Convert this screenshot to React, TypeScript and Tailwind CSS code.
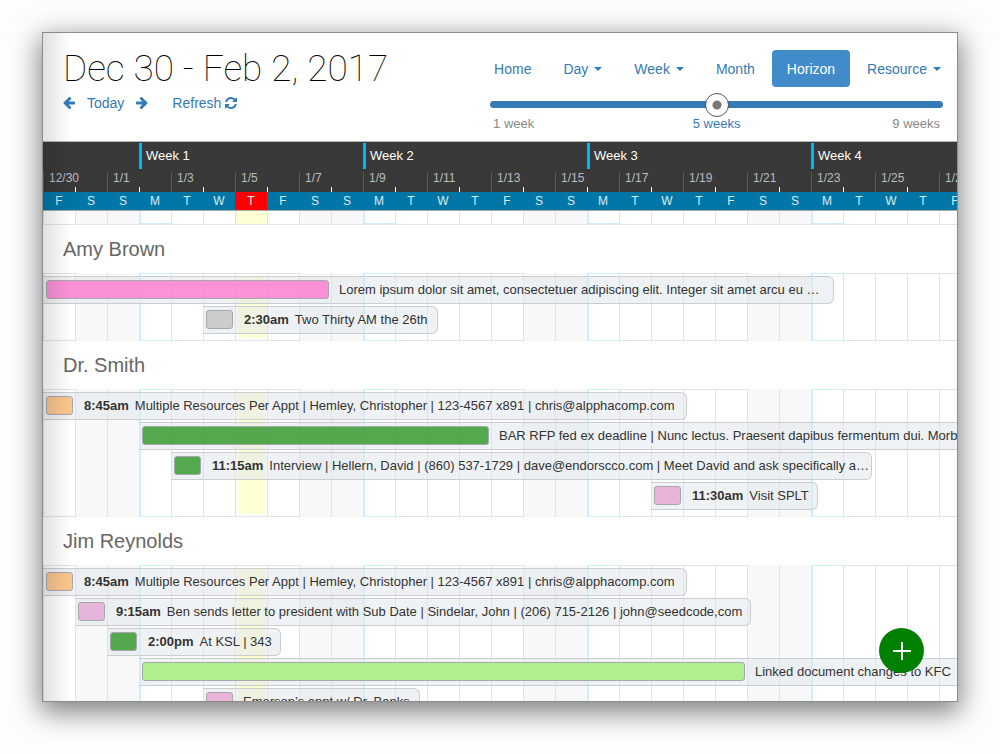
import React, { useState } from 'react';
import clsx from 'clsx';

type Appointment = {
  day: number;
  days: number;
  color: string;
  time?: string;
  text: string;
  width: number;
};

type Resource = {
  name: string;
  items: Appointment[];
};

const DAY_WIDTH = 32;
const DAY_COUNT = 29;
const TODAY = 6;
const LETTERS = ['F', 'S', 'S', 'M', 'T', 'W', 'T'];

const NAV = [
  { label: 'Home' },
  { label: 'Day', menu: true },
  { label: 'Week', menu: true },
  { label: 'Month' },
  { label: 'Horizon' },
  { label: 'Resource', menu: true },
];

const PINK = 'bg-[#fc86d5]/90';
const GRAY = 'bg-[#c8c8c8]/90';
const ORANGE = 'bg-[#f9c184]/90';
const GREEN = 'bg-[#43a03b]/90';
const MAUVE = 'bg-[#e7aed6]/90';
const LIME = 'bg-[#aaf084]/90';

const RESOURCES: Resource[] = [
  {
    name: 'Amy Brown',
    items: [
      { day: 0, days: 9, color: PINK, text: 'Lorem ipsum dolor sit amet, consectetuer adipiscing elit. Integer sit amet arcu eu …', width: 791 },
      { day: 5, days: 1, color: GRAY, time: '2:30am', text: 'Two Thirty AM the 26th', width: 235 },
    ],
  },
  {
    name: 'Dr. Smith',
    items: [
      { day: 0, days: 1, color: ORANGE, time: '8:45am', text: 'Multiple Resources Per Appt | Hemley, Christopher | 123-4567 x891 | chris@alpphacomp.com', width: 644 },
      { day: 3, days: 11, color: GREEN, text: 'BAR RFP fed ex deadline | Nunc lectus. Praesent dapibus fermentum dui. Morb', width: 960 },
      { day: 4, days: 1, color: GREEN, time: '11:15am', text: 'Interview | Hellern, David | (860) 537-1729 | dave@endorscco.com | Meet David and ask specifically a…', width: 701 },
      { day: 19, days: 1, color: MAUVE, time: '11:30am', text: 'Visit SPLT', width: 167 },
    ],
  },
  {
    name: 'Jim Reynolds',
    items: [
      { day: 0, days: 1, color: ORANGE, time: '8:45am', text: 'Multiple Resources Per Appt | Hemley, Christopher | 123-4567 x891 | chris@alpphacomp.com', width: 644 },
      { day: 1, days: 1, color: MAUVE, time: '9:15am', text: 'Ben sends letter to president with Sub Date | Sindelar, John | (206) 715-2126 | john@seedcode,com', width: 676 },
      { day: 2, days: 1, color: GREEN, time: '2:00pm', text: 'At KSL | 343', width: 174 },
      { day: 3, days: 19, color: LIME, text: 'Linked document changes to KFC', width: 960 },
      { day: 5, days: 1, color: MAUVE, text: 'Emerson’s appt w/ Dr. Banks', width: 217 },
    ],
  },
];

const dayList = Array.from({ length: DAY_COUNT }, (_, i) => i);

const dateLabel = (day: number) => {
  const d = new Date(2016, 11, 30 + day);
  return `${d.getMonth() + 1}/${d.getDate()}`;
};

const isMonday = (day: number) => day % 7 === 3;
const isWeekend = (day: number) => day % 7 === 1 || day % 7 === 2;

function ArrowIcon({ flip }: { flip?: boolean }) {
  return (
    <svg viewBox="0 -64 1536 1536" className={clsx('size-3', flip && 'rotate-180')} fill="currentColor" aria-hidden="true">
      <path d="M1536 640v128q0 53-32.500 90.500t-84.500 37.500h-704l293 294q38 36 38 90t-38 90l-75 76q-37 37-90 37-52 0-91-37l-651-652q-37-37-37-90 0-52 37-91l651-650q38-38 91-38 52 0 90 38l75 74q38 38 38 91t-38 91l-293 293h704q52 0 84.500 37.500t32.500 90.500z" />
    </svg>
  );
}

function RefreshIcon() {
  return (
    <svg viewBox="0 0 1536 1536" className="size-3" fill="currentColor" aria-hidden="true">
      <path d="M1511 928q0 5-1 7-64 268-268 434.500t-478 166.500q-146 0-282.500-55t-243.500-157l-129 129q-19 19-45 19t-45-19-19-45v-448q0-26 19-45t45-19h448q26 0 45 19t19 45-19 45l-137 137q71 66 161 102t187 36q134 0 250-65t186-179q11-17 53-117 8-23 30-23h192q13 0 22.500 9.500t9.500 22.500zm25-800v448q0 26-19 45t-45 19h-448q-26 0-45-19t-19-45 19-45l138-138q-148-137-349-137-134 0-250 65t-186 179q-11 17-53 117-8 23-30 23h-199q-13 0-22.500-9.500t-9.500-22.500v-7q65-268 270-434.500t480-166.500q146 0 284 55.500t245 156.500l130-129q19-19 45-19t45 19 19 45z" />
    </svg>
  );
}

function Header() {
  const [view, setView] = useState('Horizon');
  const [weeks, setWeeks] = useState(5);

  return (
    <header className="flex shrink-0 items-start justify-between border-b border-[#b5b5b5] bg-white pb-[9px]">
      <div className="pt-4 pl-5">
        <h1 className="font-[Roboto,sans-serif] text-[37px] leading-10 font-thin whitespace-nowrap text-black">Dec 30 - Feb 2, 2017</h1>
        <div className="flex h-7 items-center text-sm text-[#337ab7]">
          <button aria-label="Previous"><ArrowIcon /></button>
          <button className="ml-3">Today</button>
          <button aria-label="Next" className="ml-3"><ArrowIcon flip /></button>
          <button className="ml-6 flex items-center gap-1">Refresh <RefreshIcon /></button>
        </div>
      </div>
      <div className="pt-[17px] pr-px">
        <nav className="flex gap-[2px]">
          {NAV.map(({ label, menu }) => (
            <button
              key={label}
              onClick={() => setView(label)}
              className={clsx(
                'flex h-[37px] items-center rounded px-[15px] text-sm',
                view === label ? 'bg-[#428bca] text-white' : 'text-[#337ab7]'
              )}
            >
              {label}
              {menu && <span className="ml-[6px] border-x-4 border-t-4 border-x-transparent border-t-[#337ab7]" />}
            </button>
          ))}
        </nav>
        <div className="mr-[13px] ml-[11px] pt-[5px]">
          <input
            type="range"
            aria-label="Weeks shown"
            min={1}
            max={9}
            value={weeks}
            onChange={e => setWeeks(Number(e.target.value))}
            className="block h-6 w-full appearance-none bg-transparent [&::-webkit-slider-runnable-track]:h-[7px] [&::-webkit-slider-runnable-track]:rounded-full [&::-webkit-slider-runnable-track]:bg-[#337ab7] [&::-webkit-slider-thumb]:-mt-2 [&::-webkit-slider-thumb]:size-6 [&::-webkit-slider-thumb]:appearance-none [&::-webkit-slider-thumb]:rounded-full [&::-webkit-slider-thumb]:border [&::-webkit-slider-thumb]:border-[#555] [&::-webkit-slider-thumb]:bg-[radial-gradient(circle,#777_4px,#fff_5px)]"
          />
          <div className="grid grid-cols-3 px-[3px] text-[13px] leading-4 text-[#888]">
            <span>1 week</span>
            <span className="text-center text-[#337ab7]">{weeks} weeks</span>
            <span className="text-right">9 weeks</span>
          </div>
        </div>
      </div>
    </header>
  );
}

function Timescale() {
  return (
    <div className="shrink-0 overflow-hidden border-b border-[#a9a9a9] bg-[#393939]">
      <div className="flex h-7 pt-px">
        <div className="w-24 shrink-0" />
        {[1, 2, 3, 4].map(week => (
          <div key={week} className="mb-px w-56 shrink-0 border-l-[3px] border-[#00b9f2] pl-1 text-[13px] leading-[25px] text-white">
            Week {week}
          </div>
        ))}
      </div>
      <div className="flex h-[22px] items-end">
        {dayList.map(day => (
          <div key={day} className="flex w-8 shrink-0 items-end">
            {day % 2 === 0 ? (
              <span className="h-5 border-l border-[#0076a6] pl-[5px] text-xs leading-[13px] text-[#bbb]">{dateLabel(day)}</span>
            ) : (
              <span className="h-[5px] border-l border-white" />
            )}
          </div>
        ))}
      </div>
      <div className="flex h-[18px] bg-[#0076a6] text-xs leading-[18px] text-[#dcecf3]">
        {dayList.map(day => (
          <span key={day} className={clsx('w-8 shrink-0 text-center', day === TODAY && 'bg-[#ff0000]')}>
            {LETTERS[day % 7]}
          </span>
        ))}
      </div>
    </div>
  );
}

function DayCells({ inset }: { inset?: boolean }) {
  return (
    <>
      {dayList.map(day => (
        <div
          key={day}
          className={clsx(
            'w-8 shrink-0',
            isMonday(day) ? 'border-b border-l-2 border-[#cdf1fb]' : 'border-l border-[#e3e3e3]',
            isMonday(day) && inset && 'border-t',
            isWeekend(day) && 'bg-[#f8f8f8]',
            day === TODAY && inset && 'px-[2px] py-[3px]'
          )}
        >
          {day === TODAY && <div className="h-full bg-[#ffffd6]" />}
        </div>
      ))}
    </>
  );
}

function Event({ item }: { item: Appointment }) {
  return (
    <button
      className="flex h-7 items-start rounded-r-md border border-l-0 border-[#cbced1] bg-[#e0e6ec]/50 pt-[3px] pl-[3px] text-[13px] text-[#333]"
      style={{ marginLeft: item.day * DAY_WIDTH, width: item.width }}
    >
      <span
        className={clsx('h-[19px] shrink-0 rounded-[3px] border border-[#a6a8ac]', item.color)}
        style={{ width: item.days * DAY_WIDTH - 5 }}
      />
      <span className="ml-[10px] leading-5 whitespace-nowrap">
        {item.time && <b className="mr-[6px] ml-px">{item.time}</b>}
        {item.text}
      </span>
    </button>
  );
}

function ResourceGroup({ resource }: { resource: Resource }) {
  return (
    <section>
      <h2 className="border-y border-[#e3e3e3] pl-5 text-xl leading-[48px] text-[#666]">{resource.name}</h2>
      <div className="relative">
        <div className="absolute inset-x-0 -inset-y-px flex overflow-hidden">
          <DayCells inset />
        </div>
        <div className="relative flex flex-col gap-[2px] pt-[2px] pb-[6px]">
          {resource.items.map(item => (
            <Event key={item.day + item.text} item={item} />
          ))}
        </div>
      </div>
    </section>
  );
}

export default function App() {
  return (
    <div className="h-screen overflow-hidden bg-[#fdfdfd] px-[42px] pt-8 pb-[52px] font-['Liberation_Sans',Arial,sans-serif]">
      <div className="relative flex h-full flex-col overflow-hidden border border-[#8c8c8c] bg-white shadow-[0_8px_26px_2px_rgba(0,0,0,0.5)]">
        <Header />
        <Timescale />
        <main className="min-h-0 flex-1 overflow-hidden">
          <div className="flex h-[13px] overflow-hidden">
            <DayCells />
          </div>
          {RESOURCES.map(resource => (
            <ResourceGroup key={resource.name} resource={resource} />
          ))}
        </main>
        <div className="pointer-events-none absolute inset-y-0 left-0 w-7 bg-linear-to-r from-black/12 to-transparent" />
        <button aria-label="Add appointment" className="absolute right-[33px] bottom-7 flex size-[45px] items-center justify-center rounded-full bg-[#008000] text-white">
          <svg viewBox="0 0 18 18" className="size-[18px]" stroke="currentColor" strokeWidth="2" aria-hidden="true">
            <path d="M9 0v18M0 9h18" />
          </svg>
        </button>
      </div>
    </div>
  );
}
